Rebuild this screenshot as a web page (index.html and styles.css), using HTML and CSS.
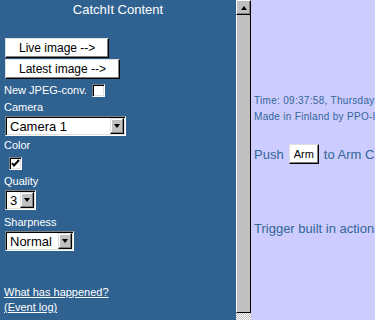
FILE: index.html
```html
<!DOCTYPE html>
<html lang="en">
<head>
    <meta charset="UTF-8">
    <title>CatchIt</title>
    <link rel="stylesheet" href="styles.css">
</head>
<body>
    <div class="window">
        <div class="side">
            <div class="side-title">CatchIt Content</div>

            <div class="side-buttons">
                <button class="btn">Live image --&gt;</button>
                <button class="btn">Latest image --&gt;</button>
            </div>

            <div class="jpeg-row">New JPEG-conv. <span class="check"></span></div>

            <div class="field-label">Camera</div>
            <div class="combo combo-camera">
                <select><option>Camera 1</option></select>
                <span class="combo-btn"></span>
            </div>

            <div class="field-label label-color">Color</div>
            <span class="check check-color">
                <svg width="9" height="9" viewBox="0 0 9 9"><path d="M1 4 L3 6.5 L8 1" fill="none" stroke="#000" stroke-width="2"/></svg>
            </span>

            <div class="field-label label-quality">Quality</div>
            <div class="combo combo-quality">
                <select><option>3</option></select>
                <span class="combo-btn"></span>
            </div>

            <div class="field-label label-sharp">Sharpness</div>
            <div class="combo combo-sharp">
                <select><option>Normal</option></select>
                <span class="combo-btn"></span>
            </div>

            <div class="side-links">
                <a href="#">What has happened?</a><br>
                <a href="#">(Event log)</a>
            </div>
        </div>

        <div class="scrollbar">
            <div class="sb-up"></div>
            <div class="sb-track"></div>
            <div class="sb-corner"></div>
        </div>

        <div class="main">
            <div class="info">Time: 09:37:58, Thursday 14.03.2002</div>
            <div class="info">Made in Finland by PPO-Industries</div>
            <div class="push-row">Push <button class="btn btn-arm">Arm</button> to Arm CatchIt</div>
            <div class="trigger">Trigger built in action</div>
        </div>
    </div>
</body>
</html>
```

FILE: styles.css
```css
body {
    margin: 0;
    font-family: "Liberation Sans", Arial, sans-serif;
}
.window {
    display: flex;
    height: 320px;
    overflow: hidden;
}

/* left frame */
.side {
    width: 236px;
    flex-shrink: 0;
    background-color: #306291;
    color: #fff;
    font-size: 11px;
    padding-left: 4px;
    box-sizing: border-box;
}
.side-title {
    font-size: 13px;
    line-height: 20px;
    text-align: center;
    padding-right: 4px;
}
.side-buttons {
    margin-top: 18px;
    margin-left: 1px;
}
.btn {
    display: block;
    height: 20px;
    padding: 0 13px;
    margin-bottom: 1px;
    background: #fff;
    color: #000;
    font-family: "Liberation Sans", Arial, sans-serif;
    font-size: 12px;
    border: 1px solid;
    border-color: #dfdfdf #000 #000 #dfdfdf;
    box-shadow: inset -1px -1px #808080;
}
.jpeg-row {
    display: flex;
    align-items: center;
    gap: 5px;
    height: 16px;
    margin-top: 3px;
}
.check {
    display: inline-flex;
    align-items: center;
    justify-content: center;
    width: 13px;
    height: 13px;
    box-sizing: border-box;
    background: #fff;
    border: 1px solid;
    border-color: #808080 #fff #fff #808080;
    box-shadow: inset 1px 1px #000, inset -1px -1px #dfdfdf;
}
.field-label {
    line-height: 14px;
    margin-top: 2px;
}
.label-color {
    margin-top: 2px;
}
.check-color {
    margin: 5px 0 0 5px;
    vertical-align: top;
}
.label-quality {
    margin-top: 4px;
}
.label-sharp {
    margin-top: 5px;
}
.combo {
    display: flex;
    height: 20px;
    margin-left: 1px;
    box-sizing: border-box;
    background: #fff;
    border: 1px solid;
    border-color: #808080 #fff #fff #808080;
    box-shadow: inset 1px 1px #000, inset -1px -1px #dfdfdf;
    padding: 1px;
}
.field-label + .combo {
    margin-top: 2px;
}
.combo select {
    flex: 1;
    min-width: 0;
    height: 16px;
    appearance: none;
    border: none;
    background: #fff;
    color: #000;
    font-family: "Liberation Sans", Arial, sans-serif;
    font-size: 13px;
    padding: 0 0 0 3px;
    outline: none;
}
.combo-btn {
    width: 14px;
    height: 16px;
    box-sizing: border-box;
    background: #c0c0c0;
    border: 1px solid;
    border-color: #dfdfdf #000 #000 #dfdfdf;
    box-shadow: inset -1px -1px #808080, inset 1px 1px #fff;
    display: flex;
    align-items: center;
    justify-content: center;
}
.combo-btn::after {
    content: "";
    border-top: 4px solid #000;
    border-left: 3.5px solid transparent;
    border-right: 3.5px solid transparent;
}
.combo-camera {
    width: 121px;
}
.combo-quality {
    width: 31px;
}
.combo-sharp {
    width: 69px;
}
.side-links {
    margin-top: 34px;
    line-height: 15px;
}
.side-links a {
    color: #fff;
}

/* scrollbar of the left frame */
.scrollbar {
    width: 15px;
    flex-shrink: 0;
    display: flex;
    flex-direction: column;
    background: #306291;
}
.sb-up {
    height: 15px;
    box-sizing: border-box;
    background: #c0c0c0;
    border: 1px solid;
    border-color: #fff #000 #000 #fff;
    box-shadow: inset -1px -1px #808080;
    display: flex;
    align-items: center;
    justify-content: center;
}
.sb-up::after {
    content: "";
    border-bottom: 4px solid #000;
    border-left: 3.5px solid transparent;
    border-right: 3.5px solid transparent;
}
.sb-track {
    flex: 1;
    background: #c0c0c0;
    border-left: 1px solid #fff;
    border-right: 1px solid #000;
    border-bottom: 1px solid #000;
}
.sb-corner {
    height: 7px;
    background: repeating-conic-gradient(#fff 0 25%, #c0c0c0 0 50%) 0 0 / 2px 2px;
}

/* right frame */
.main {
    flex: 1;
    background-color: #ccccff;
    color: #336699;
    padding: 93px 0 0 3px;
    white-space: nowrap;
    overflow: hidden;
}
.info {
    font-size: 10px;
    letter-spacing: 0.3px;
    line-height: 16px;
}
.push-row {
    display: flex;
    align-items: center;
    gap: 4px;
    margin-top: 18px;
    height: 22px;
    font-size: 13px;
}
.btn-arm {
    display: inline-block;
    padding: 0 4px;
    margin: 0 1px;
    font-size: 11px;
}
.trigger {
    margin-top: 56px;
    font-size: 13px;
    line-height: 16px;
}
```
